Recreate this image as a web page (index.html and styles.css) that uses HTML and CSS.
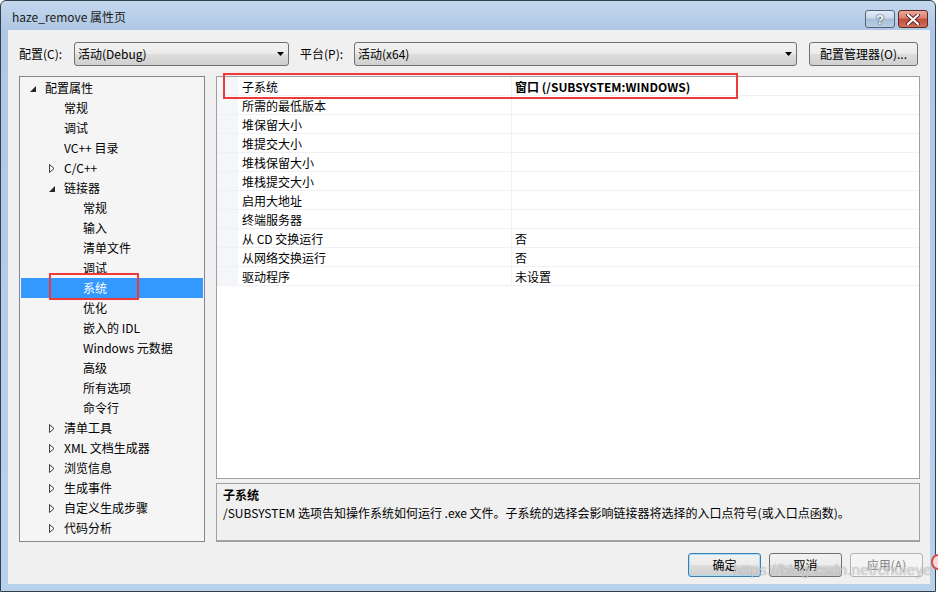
FILE: index.html
```html
<!DOCTYPE html>
<html>

<head>
    <meta charset="utf-8">
    <title>haze_remove 属性页</title>
    <link rel="stylesheet" href="styles.css">
</head>

<body>
    <div class="window">
        <div class="titlebar">
            <span class="title">haze_remove 属性页</span>
            <div class="capButtons">
                <span class="capBtn capHelp">?</span>
                <span class="capBtn capClose">
                    <svg width="14" height="11" viewBox="0 0 14 11">
                        <path d="M2 1 L12 10 M12 1 L2 10" stroke="#5a2020" stroke-width="4" stroke-linecap="round" />
                        <path d="M2 1 L12 10 M12 1 L2 10" stroke="#ffffff" stroke-width="2.2" stroke-linecap="round" />
                    </svg>
                </span>
            </div>
        </div>

        <div class="client">
            <!-- configuration / platform row -->
            <div class="toolbar">
                <span class="label labelConfig">配置(C):</span>
                <div class="combo comboConfig">
                    <span>活动(Debug)</span>
                    <svg class="comboArrow" width="7" height="4" viewBox="0 0 7 4"><path d="M0 0 L7 0 L3.5 4 Z" fill="#000" /></svg>
                </div>
                <span class="label labelPlatform">平台(P):</span>
                <div class="combo comboPlatform">
                    <span>活动(x64)</span>
                    <svg class="comboArrow" width="7" height="4" viewBox="0 0 7 4"><path d="M0 0 L7 0 L3.5 4 Z" fill="#000" /></svg>
                </div>
                <span class="button managerButton">配置管理器(O)...</span>
            </div>

            <div class="main">
                <!-- left tree -->
                <div class="tree">
                    <div class="node lvl0"><span class="arrow"><svg width="6" height="6" viewBox="0 0 6 6"><path d="M6 0 L6 6 L0 6 Z" fill="#262626" /></svg></span>配置属性</div>
                    <div class="node lvl1"><span class="arrow"></span>常规</div>
                    <div class="node lvl1"><span class="arrow"></span>调试</div>
                    <div class="node lvl1"><span class="arrow"></span>VC++ 目录</div>
                    <div class="node lvl1"><span class="arrow"><svg width="6" height="9" viewBox="0 0 6 9"><path d="M0.5 0.5 L5 4.5 L0.5 8.5 Z" fill="none" stroke="#3c3c3c" stroke-width="1" /></svg></span>C/C++</div>
                    <div class="node lvl1"><span class="arrow"><svg width="6" height="6" viewBox="0 0 6 6"><path d="M6 0 L6 6 L0 6 Z" fill="#262626" /></svg></span>链接器</div>
                    <div class="node lvl2"><span class="arrow"></span>常规</div>
                    <div class="node lvl2"><span class="arrow"></span>输入</div>
                    <div class="node lvl2"><span class="arrow"></span>清单文件</div>
                    <div class="node lvl2"><span class="arrow"></span>调试</div>
                    <div class="node lvl2 selected"><span class="arrow"></span>系统</div>
                    <div class="node lvl2"><span class="arrow"></span>优化</div>
                    <div class="node lvl2"><span class="arrow"></span>嵌入的 IDL</div>
                    <div class="node lvl2"><span class="arrow"></span>Windows 元数据</div>
                    <div class="node lvl2"><span class="arrow"></span>高级</div>
                    <div class="node lvl2"><span class="arrow"></span>所有选项</div>
                    <div class="node lvl2"><span class="arrow"></span>命令行</div>
                    <div class="node lvl1"><span class="arrow"><svg width="6" height="9" viewBox="0 0 6 9"><path d="M0.5 0.5 L5 4.5 L0.5 8.5 Z" fill="none" stroke="#3c3c3c" stroke-width="1" /></svg></span>清单工具</div>
                    <div class="node lvl1"><span class="arrow"><svg width="6" height="9" viewBox="0 0 6 9"><path d="M0.5 0.5 L5 4.5 L0.5 8.5 Z" fill="none" stroke="#3c3c3c" stroke-width="1" /></svg></span>XML 文档生成器</div>
                    <div class="node lvl1"><span class="arrow"><svg width="6" height="9" viewBox="0 0 6 9"><path d="M0.5 0.5 L5 4.5 L0.5 8.5 Z" fill="none" stroke="#3c3c3c" stroke-width="1" /></svg></span>浏览信息</div>
                    <div class="node lvl1"><span class="arrow"><svg width="6" height="9" viewBox="0 0 6 9"><path d="M0.5 0.5 L5 4.5 L0.5 8.5 Z" fill="none" stroke="#3c3c3c" stroke-width="1" /></svg></span>生成事件</div>
                    <div class="node lvl1"><span class="arrow"><svg width="6" height="9" viewBox="0 0 6 9"><path d="M0.5 0.5 L5 4.5 L0.5 8.5 Z" fill="none" stroke="#3c3c3c" stroke-width="1" /></svg></span>自定义生成步骤</div>
                    <div class="node lvl1"><span class="arrow"><svg width="6" height="9" viewBox="0 0 6 9"><path d="M0.5 0.5 L5 4.5 L0.5 8.5 Z" fill="none" stroke="#3c3c3c" stroke-width="1" /></svg></span>代码分析</div>

                    <div class="redMark markTree"></div>
                </div>

                <div class="rightPane">
                    <!-- property grid -->
                    <div class="propGrid">
                        <div class="prow"><span class="gutter"></span><span class="pname">子系统</span><span class="pval bold">窗口 (/SUBSYSTEM:WINDOWS)</span></div>
                        <div class="prow"><span class="gutter"></span><span class="pname">所需的最低版本</span><span class="pval"></span></div>
                        <div class="prow"><span class="gutter"></span><span class="pname">堆保留大小</span><span class="pval"></span></div>
                        <div class="prow"><span class="gutter"></span><span class="pname">堆提交大小</span><span class="pval"></span></div>
                        <div class="prow"><span class="gutter"></span><span class="pname">堆栈保留大小</span><span class="pval"></span></div>
                        <div class="prow"><span class="gutter"></span><span class="pname">堆栈提交大小</span><span class="pval"></span></div>
                        <div class="prow"><span class="gutter"></span><span class="pname">启用大地址</span><span class="pval"></span></div>
                        <div class="prow"><span class="gutter"></span><span class="pname">终端服务器</span><span class="pval"></span></div>
                        <div class="prow"><span class="gutter"></span><span class="pname">从 CD 交换运行</span><span class="pval">否</span></div>
                        <div class="prow"><span class="gutter"></span><span class="pname">从网络交换运行</span><span class="pval">否</span></div>
                        <div class="prow"><span class="gutter"></span><span class="pname">驱动程序</span><span class="pval">未设置</span></div>

                        <div class="redMark markGrid"></div>
                    </div>

                    <!-- description -->
                    <div class="descBox">
                        <div class="descTitle">子系统</div>
                        <div class="descText">/SUBSYSTEM 选项告知操作系统如何运行 .exe 文件。子系统的选择会影响链接器将选择的入口点符号(或入口点函数)。</div>
                    </div>
                </div>
            </div>

            <div class="buttonRow">
                <span class="button dlgButton focused">确定</span>
                <span class="button dlgButton">取消</span>
                <span class="button dlgButton disabled">应用(A)</span>
            </div>
        </div>

        <div class="watermark">https://blog.csdn.net/chuieye</div>
    </div>
    <div class="edgeBadge"></div>
</body>

</html>
```

FILE: styles.css
```css
body {
    margin: 0;
    background-color: #ffffff;
    font-family: "Noto Sans CJK SC", "Liberation Sans", sans-serif;
    font-size: 12px;
    color: #000000;
}

.window {
    position: relative;
    width: 936px;
    height: 592px;
    box-sizing: border-box;
    border: 1px solid #34404e;
    border-radius: 6px 6px 0 0;
    padding: 0 5px 6px 7px;
    background: linear-gradient(to bottom, #c4d8ee 0px, #afc7e4 30px, #b9d2ec 100%);
}

/* title bar */
.titlebar {
    height: 29px;
    display: flex;
    align-items: flex-start;
    justify-content: space-between;
}

.title {
    margin-left: 4px;
    margin-top: 8px;
    line-height: 16px;
    color: #1a1a1a;
}

.capButtons {
    display: flex;
    gap: 3px;
    margin-top: 9px;
    margin-right: 2px;
}

.capBtn {
    display: flex;
    align-items: center;
    justify-content: center;
    width: 28px;
    height: 16px;
    border: 1px solid #51647c;
    border-radius: 3px;
}

.capHelp {
    background: linear-gradient(to bottom, #e3ecf7 0%, #c9d8ea 45%, #a9bfd9 50%, #b9cde3 100%);
    color: #ffffff;
    font-family: "Liberation Sans", sans-serif;
    font-weight: bold;
    font-size: 13px;
    text-shadow: 0 0 2px #2c3e57, 0 0 1px #2c3e57;
}

.capClose {
    border-color: #5b2a22;
    background: linear-gradient(to bottom, #e9a99b 0%, #d9806e 45%, #c24a38 50%, #d1705c 100%);
}

/* client area */
.client {
    height: 554px;
    box-sizing: border-box;
    background-color: #f0f0f0;
    padding: 12px 0 0 11px;
}

.toolbar {
    display: flex;
    align-items: center;
    height: 24px;
}

.label {
    line-height: 24px;
}

.labelConfig {
    width: 55px;
}

.labelPlatform {
    width: 54px;
}

.combo {
    position: relative;
    height: 24px;
    box-sizing: border-box;
    border: 1px solid #707070;
    border-radius: 3px;
    background: linear-gradient(to bottom, #f2f2f2 0%, #ebebeb 50%, #dddddd 51%, #cfcfcf 100%);
    padding-left: 3px;
    line-height: 22px;
}

.comboConfig {
    width: 215px;
    margin-right: 11px;
}

.comboPlatform {
    width: 443px;
}

.comboArrow {
    position: absolute;
    right: 4px;
    top: 9px;
}

.button {
    display: inline-block;
    box-sizing: border-box;
    height: 24px;
    line-height: 22px;
    text-align: center;
    border: 1px solid #707070;
    border-radius: 3px;
    background: linear-gradient(to bottom, #f2f2f2 0%, #ebebeb 50%, #dddddd 51%, #cfcfcf 100%);
}

.managerButton {
    width: 109px;
    margin-left: 12px;
}

/* main panes */
.main {
    display: flex;
    margin-top: 10px;
    height: 466px;
}

.tree {
    position: relative;
    width: 186px;
    box-sizing: border-box;
    border: 1px solid #828790;
    background-color: #f5f5f5;
    padding: 1px;
}

.node {
    display: flex;
    align-items: center;
    height: 20px;
    line-height: 20px;
    white-space: nowrap;
}

.lvl0 {
    padding-left: 9px;
}

.lvl1 {
    padding-left: 28px;
}

.lvl2 {
    padding-left: 47px;
}

.arrow {
    display: flex;
    align-items: center;
    width: 15px;
    height: 20px;
}

.lvl0 .arrow svg,
.lvl1 .arrow svg {
    margin-top: 1px;
}

.selected {
    background-color: #3399ff;
    color: #ffffff;
}

.redMark {
    position: absolute;
    box-sizing: border-box;
    border: 2px solid #f03a3a;
}

.markTree {
    left: 29px;
    top: 196px;
    width: 90px;
    height: 27px;
}

.rightPane {
    display: flex;
    flex-direction: column;
    width: 704px;
    margin-left: 11px;
}

.propGrid {
    position: relative;
    height: 403px;
    box-sizing: border-box;
    border: 1px solid #a0a0a0;
    background-color: #ffffff;
}

.prow {
    display: flex;
    height: 19px;
    box-sizing: border-box;
    border-bottom: 1px solid #eef1f6;
    line-height: 19px;
}

.gutter {
    width: 21px;
    background-color: #f4f6fa;
}

.pname {
    width: 269px;
    padding-left: 4px;
    border-right: 1px solid #eef1f6;
}

.pval {
    flex: 1;
    padding-left: 3px;
}

.bold {
    font-weight: bold;
}

.markGrid {
    left: 6px;
    top: -4px;
    width: 515px;
    height: 26px;
}

.descBox {
    margin-top: 4px;
    height: 59px;
    box-sizing: border-box;
    border: 1px solid #a0a0a0;
    border-bottom: 2px solid #a0a0a0;
    background-color: #f0f0f0;
    padding: 2px 6px;
    line-height: 18px;
}

.descTitle {
    font-weight: bold;
}

/* bottom buttons */
.buttonRow {
    display: flex;
    justify-content: flex-end;
    gap: 8px;
    margin-top: 11px;
    padding-right: 7px;
}

.dlgButton {
    width: 73px;
}

.focused {
    border-color: #3c7fb1;
    box-shadow: inset 0 0 0 1px #a8dcf7;
}

.disabled {
    border-color: #adb2b5;
    background: #f4f4f4;
    color: #838383;
}

.watermark {
    position: absolute;
    left: 732px;
    top: 560px;
    font-family: "Liberation Sans", sans-serif;
    font-size: 15px;
    color: rgba(255, 255, 255, 0.6);
    text-shadow: 0 0 1px rgba(90, 90, 90, 0.7);
    letter-spacing: 0.3px;
}

.edgeBadge {
    position: absolute;
    left: 931px;
    top: 554px;
    width: 14px;
    height: 16px;
    box-sizing: border-box;
    border: 2px solid #d84a4a;
    border-radius: 50%;
    background-color: #f7dcdc;
}
```
